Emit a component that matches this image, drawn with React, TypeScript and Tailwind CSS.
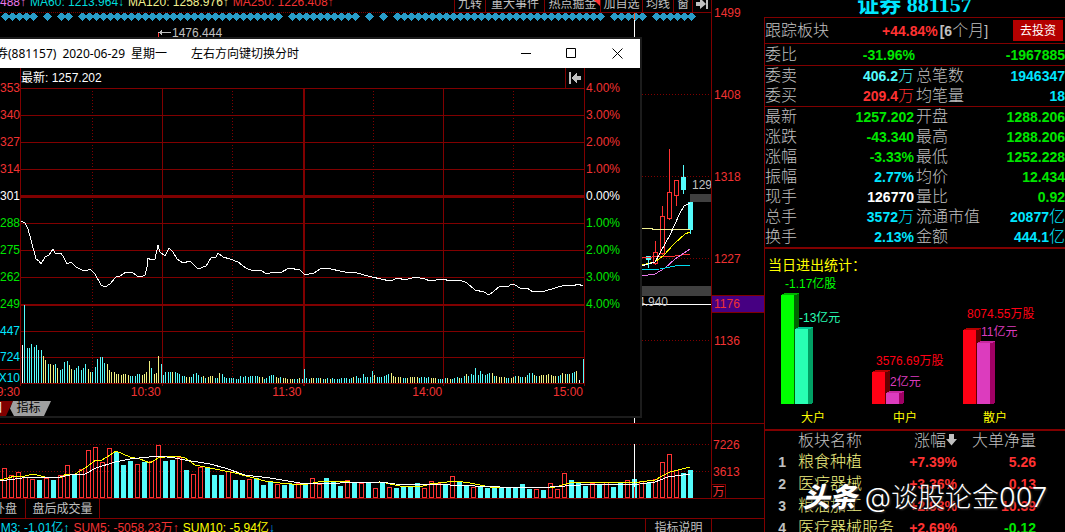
import { Fragment } from "react";

const RED = "#ff3232";
const CYAN = "#54fcfc";
const GRID = "#800000";

const maLegend = [
  { text: "488↑", color: "text-[#e878e8]" },
  { text: "MA60: 1213.964↓", color: "text-[#00dcdc]" },
  { text: "MA120: 1258.976↑", color: "text-[#f0f090]" },
  { text: "MA250: 1226.408↑", color: "text-[#f03232]" },
];

const toolbar = [
  { label: "九转", width: "w-[31px]" },
  { label: "重大事件", width: "w-[59px]" },
  { label: "热点掘金", width: "w-[56px]", hot: true },
  { label: "加自选", width: "w-[42px]" },
  { label: "均线", width: "w-[31px]" },
  { label: "窗", width: "w-[19px]" },
];

const priceAxis = ["1499", "1408", "1318", "1227", "1136"];

const diamondGaps = [5, 7, 10, 40, 51, 53, 55, 86, 92];
const diamonds = Array.from({ length: 99 }, (_, i) => i).filter((i) => !diamondGaps.includes(i));

const dayVolume =
  "r30 r23 r26 r21 r19 c18 r20 c18 r23 r33 c23 r29 r48 r51 r36 r50 c46 c33 c37 r34 c36 r37 r53 c37 c38 r41 c28 r24 r31 c30 c23 c23 r27 c18 c18 r19 c20 c13 c16 r14 c13 c14 r15 c13 r20 r14 c20 c16 c12 r18 c15 r15 c15 r10 c15 r11 c10 c11 c11 c15 r10 r17 r15 c13 r22 c16 c12 r11 c11 c10 c12 c10 c10 c11 c14 c9 r9 c8 r15 r9 r25 c18 c16 c12 r15 c14 r16 c11 c16 r18 c19 r17 c15 r19 r36 r44 r28 c25 c28".split(
    " ",
  );

const minuteVolume = [
  "w38 c78 c35 c35 c39 c36 c38 c33 c33 y27",
  "y23 c19 y19 y18 c19 y15 c13 c14 c21 c22",
  "y18 y14 c13 c15 c17 c13 c15 c19 y14 y11",
  "c11 c16 c24 c26 c26 c20 y19 y13 y11 y11",
  "y9 y9 y8 y9 y9 y8 c7 c7 c7 c9",
  "c9 y8 y9 y11 y22 c15 y9 y10 y27 c19",
  "c8 c11 c11 c11 y11 c11 c10 c9 c7 c7",
  "y6 y6 c6 c9 c10 c8 c6 y7 c5 y6",
  "y7 y7 c5 c5 y10 c9 c6 c5 c5 c5",
  "c5 c4 c4 c7 c6 c7 c6 c7 c7 c7",
  "c7 y6 y6 c4 c5 c7 c8 c8 y6 y5",
  "c6 y5 y5 y4 y4 y4 c4 c4 y5 c4",
  "c14 c5 c4 y5 y5 c5 c5 y5 c4 y4",
  "c5 y4 c5 c4 c4 c4 c5 c5 c5 c4",
  "c5 y6 c7 c5 c5 c9 c6 c6 c6 c12",
  "y8 c6 c6 c6 c7 c8 c9 y10 y7 y6",
  "y6 y6 c5 c5 y5 y6 y6 y6 y6 c5",
  "c6 c6 c5 c6 y5 y5 y5 c4 c4 c4",
  "c5 y5 y4 c4 c5 c6 y5 c5 c7 y9",
  "c7 c9 c8 c15 c8 c12 c9 c8 c9 c10",
  "y10 c7 y7 y6 y6 y6 c5 c5 y5 y6",
  "c7 y7 c6 c6 y6 c8 c10 c10 y8 c7",
  "y7 y8 y8 y8 y9 y8 y7 y7 c7 c8",
  "y10 y9 c9 y9 c10 c11 y12 w3 w0 c24",
]
  .join(" ")
  .split(" ");

const barColors: Record<string, string> = { c: CYAN, y: "#f0f080", w: "#ffffff", r: RED };

const minuteLine =
  "21,221 25,223 28,229 31,240 36,259 39,261 41,264 45,257 49,255 53,249 55,253 61,253 64,258 67,264 71,262 76,267 82,270 86,271 90,269 95,274 101,285 105,287 110,284 116,277 120,276 126,272 132,272 137,276 141,277 145,275 147,267 148,258 151,260 155,259 158,245 160,252 165,256 169,248 173,252 177,259 183,263 190,261 198,269 206,266 211,258 216,257 218,253 223,257 230,259 238,262 246,268 253,271 260,270 267,274 273,272 280,273 289,268 300,270 305,275 314,273 320,269 326,268 345,272 353,272 372,277 390,281 398,278 405,280 415,277 425,279 430,281 443,279 450,281 460,280 467,283 475,290 484,292 489,295 493,292 500,286 508,287 511,284 515,285 520,288 527,288 533,292 545,291 555,288 565,285 573,286 578,284 583,286";

const minutePrices = [
  { price: "353", pct: "4.00%", color: "text-[#f03232]" },
  { price: "340", pct: "3.00%", color: "text-[#f03232]" },
  { price: "327", pct: "2.00%", color: "text-[#f03232]" },
  { price: "314", pct: "1.00%", color: "text-[#f03232]" },
  { price: "301", pct: "0.00%", color: "text-white" },
  { price: "288", pct: "1.00%", color: "text-[#00e600]" },
  { price: "275", pct: "2.00%", color: "text-[#00e600]" },
  { price: "262", pct: "3.00%", color: "text-[#00e600]" },
  { price: "249", pct: "4.00%", color: "text-[#00e600]" },
];

const green = "text-[#00e600]";
const cyan = "text-[#00e6ff]";

const quotes = [
  { left: ["最新", "1257.202", green], right: ["开盘", "1288.206", green] },
  { left: ["涨跌", "-43.340", green], right: ["最高", "1288.206", green] },
  { left: ["涨幅", "-3.33%", green], right: ["最低", "1252.228", green] },
  { left: ["振幅", "2.77%", cyan], right: ["均价", "12.434", green] },
  { left: ["现手", "126770", "text-white"], right: ["量比", "0.92", green] },
  { left: ["总手", "3572万", cyan], right: ["流通市值", "20877亿", cyan] },
  { left: ["换手", "2.13%", cyan], right: ["金额", "444.1亿", cyan] },
];

const orders = [
  { left: ["委卖", "406.2万", "text-[#54fcfc]"], right: ["总笔数", "1946347", cyan] },
  { left: ["委买", "209.4万", "text-[#ff3232]"], right: ["均笔量", "18", cyan] },
];

const sectors = [
  { name: "粮食种植", change: "+7.39%", net: "5.26", netColor: "text-[#ff3232]" },
  { name: "医疗器械", change: "+3.36%", net: "0.13", netColor: "text-[#ff3232]" },
  { name: "粮油加工", change: "+2.93%", net: "10.39", netColor: "text-[#ff3232]" },
  { name: "医疗器械服务", change: "+2.69%", net: "-0.12", netColor: "text-[#00e600]" },
];

const flowBars = [
  { x: 781, top: 295, front: "#00ff00", side: "#006400", cap: "#00b400" },
  { x: 795, top: 329, front: "#28ffb4", side: "#00a064", cap: "#00c896" },
  { x: 872, top: 372, front: "#ff0014", side: "#640000", cap: "#b40000" },
  { x: 886, top: 393, front: "#dc3cbe", side: "#a00064", cap: "#c828a0" },
  { x: 963, top: 330, front: "#ff0014", side: "#640000", cap: "#b40000" },
  { x: 977, top: 343, front: "#dc3cbe", side: "#a00064", cap: "#c828a0" },
];

const flowLabels = [
  { x: 785, y: 288, text: "-1.17亿股", fill: "#00ff00" },
  { x: 799, y: 322, text: "-13亿元", fill: "#28ffb4" },
  { x: 876, y: 365, text: "3576.69万股", fill: "#ff0014" },
  { x: 890, y: 386, text: "2亿元", fill: "#dc3cbe" },
  { x: 967, y: 318, text: "8074.55万股", fill: "#ff0014" },
  { x: 981, y: 336, text: "11亿元", fill: "#dc3cbe" },
  { x: 801, y: 422, text: "大户", fill: "#ffff00" },
  { x: 893, y: 422, text: "中户", fill: "#ffff00" },
  { x: 983, y: 422, text: "散户", fill: "#ffff00" },
];

function QuoteRows({ rows }: { rows: { left: string[]; right: string[] }[] }) {
  return (
    <dl className="grid grid-cols-2 gap-x-[2px] leading-5">
      {rows.map((row) => (
        <Fragment key={row.left[0]}>
          {[row.left, row.right].map(([label, value, color]) => (
            <div key={label} className="flex h-5 items-center justify-between">
              <dt className="text-base/5 font-light">{label}</dt>
              <dd className={`text-sm/5 font-bold ${color}`}>
                {value.replace(/[万亿]/, "")}
                <span className="text-base/5 font-light">{value.match(/[万亿]/)?.[0]}</span>
              </dd>
            </div>
          ))}
        </Fragment>
      ))}
    </dl>
  );
}

function TopBar() {
  return (
    <div className="flex h-[13px] items-end justify-between overflow-hidden whitespace-nowrap">
      <div className="flex h-[13px] flex-1 items-end gap-1 border-b border-dotted border-[#800000] pb-[3px] leading-[14px]">
        {maLegend.map((item) => (
          <span key={item.text} className={item.color}>
            {item.text}
          </span>
        ))}
      </div>
      <div className="flex h-[13px] items-end border-b border-[#800000]">
        {toolbar.map((item) => (
          <button
            key={item.label}
            className={`relative h-5 shrink-0 border-l border-[#800000] pt-1 text-center leading-[14px] ${item.width}`}
          >
            {item.label}
            {item.hot && (
              <svg className="absolute right-0 bottom-1.5 h-[7px] w-[7px]" viewBox="0 0 7 7">
                <path d="M0 0h7v7z" fill={RED} />
              </svg>
            )}
          </button>
        ))}
        <button aria-label="收起" className="h-5 w-[19px] shrink-0 border-l border-[#800000] pt-1">
          <svg className="mx-auto h-[14px] w-[13px]" viewBox="0 0 13 14" fill="#c0c0c0">
            <path d="M0 5h4V1l6 6-6 5V9H0zM10 1h2v11h-2z" />
          </svg>
        </button>
      </div>
    </div>
  );
}

function DayChart() {
  const hollow = [
    { x: 676, top: 180, bottom: 195, high: 180, low: 206 },
    { x: 669, top: 192, bottom: 218, high: 149, low: 220 },
    { x: 662, top: 216, bottom: 253, high: 206, low: 255 },
    { x: 655, top: 252, bottom: 263, high: 241, low: 265 },
  ];
  return (
    <svg
      className="block h-[410px] w-full"
      viewBox="0 13 711 410"
      preserveAspectRatio="none"
      shapeRendering="crispEdges"
      fill="none"
    >
      <path d="M0 94.5H709M0 176.5H709M0 258.5H709M0 340.5H709" stroke={GRID} strokeDasharray="1 2" />
      {diamonds.map((i) => (
        <path key={i} d={`M${5 + i * 7} 12l4.500 4.500-4.500 4.500-4.500-4.500z`} fill="#289cc8" />
      ))}
      <path d="M634.5 20V40M634.500 416V423" stroke="#fff" />
      <path d="M634.5 13V20" stroke="#f06432" />
      <path d="M158.500 32V38" stroke={RED} />
      <path d="M159 32.500H171" stroke="#c0c0c0" />
      <path d="M158 32.500l4-2.500v5z" fill="#c0c0c0" />
      {hollow.map((c) => (
        <g key={c.x} stroke={RED}>
          <path d={`M${c.x + 0.5} ${c.high}V${c.top}M${c.x + 0.5} ${c.bottom}V${c.low}`} />
          <rect x={c.x - 1.5} y={c.top + 0.5} width="4" height={c.bottom - c.top} />
        </g>
      ))}
      <path d="M683.5 165V194M690.500 202V234M648.500 256V268" stroke={CYAN} />
      <path d="M681 177h5v13h-5zM688 202h5v28h-5zM646 256h5v4h-5z" fill={CYAN} />
      <path d="M641 228.500h11v1h38" stroke="#f0f090" />
      <path d="M641 257.500L675 256L690 254" stroke={RED} />
      <path d="M641 276L655 274L665 268L675 259L690 249" stroke="#e878e8" />
      <path d="M641 269.500L660 269L675 266L690 265" stroke="#00dcf0" />
      <path d="M641 265L655 262L663 256L675 243L685 234L690 232" stroke="#ffff00" />
      <path d="M641 266L655 262L660 253L670 235L680 213L684 206L690 203" stroke="#fff" />
      <path d="M690 194h21v8h-21zM641 286h70v10h-70z" fill="#404040" />
      <path d="M641 304.500H711" stroke="#fff" />
      <g fill="#c0c0c0" fontSize="12">
        <text x="172" y="37">
          1476.444
        </text>
        <text x="692" y="189">
          129
        </text>
        <text x="638" y="306">
          4.940
        </text>
      </g>
    </svg>
  );
}

function DayVolume() {
  return (
    <svg
      className="block h-[74px] w-full"
      viewBox="0 424 711 74"
      preserveAspectRatio="none"
      shapeRendering="crispEdges"
      fill="none"
    >
      <path d="M0 444.500H709M0 471.500H709" stroke={GRID} strokeDasharray="1 2" />
      {dayVolume.map((bar, i) => {
        const height = Number(bar.slice(1));
        const x = 2 + i * 7;
        return bar[0] === "c" ? (
          <rect key={i} x={x} y={498 - height} width="5" height={height} fill={CYAN} />
        ) : (
          <rect key={i} x={x + 0.5} y={498.5 - height} width="4" height={height - 1} stroke={RED} />
        );
      })}
      <polyline
        stroke="#ffff00"
        points="0,480 8,478 15,476 25,476 33,474 45,477 60,478 66,474 75,474 85,468 96,460 102,460 110,455 116,451 130,457 140,459 150,463 158,458 165,457 177,456 185,458 195,465 210,468 225,471 235,473 250,477 265,481 280,483 303,485 318,482 345,481 355,483 382,482 390,484 400,486 420,487 430,484 455,481 470,483 490,487 520,488 555,487 570,483 590,482 610,483 640,482 655,480 662,476 670,472 690,467"
      />
      <polyline
        stroke="#fff"
        points="0,481 30,477 60,477 70,475 85,474 96,468 115,462 130,459 158,456 175,458 185,460 210,464 225,468 245,475 270,478 300,483 340,483 380,482 395,484 450,485 500,487 550,487 580,485 640,484 655,482 668,477 690,474"
      />
      <path d="M634.5 444V487" stroke="#fff" />
      <path d="M634.5 487V498" stroke="#c00000" />
    </svg>
  );
}

function MinuteChart() {
  return (
    <svg
      className="block h-[298px] w-full"
      viewBox="20 88 565 298"
      preserveAspectRatio="none"
      shapeRendering="crispEdges"
      fill="none"
    >
      <g stroke={GRID}>
        <path d="M20 88.500H585M20 115.500H585M20 142.500H585M20 169.500H585M20 223.500H585M20 250.500H585M20 277.500H585M20 331.500H585M20 357.500H585M20 383.500H585" />
        <path d="M20 196.500H585" strokeWidth="3" />
        <path d="M20 305H585M304 88V386" strokeWidth="2" />
        <path d="M20.500 88V386M162.500 88V386M443.500 88V386M584.500 88V386" />
        <path d="M92.500 91V383M232.500 91V383M373.500 91V383M513.500 91V383" strokeDasharray="1 2" />
      </g>
      {minuteVolume.map((bar, i) => {
        const height = Number(bar.slice(1));
        return (
          <rect
            key={i}
            x={Math.round(22 + i * 2.349)}
            y={383 - height}
            width="1"
            height={height}
            fill={barColors[bar[0]]}
          />
        );
      })}
      <polyline points={minuteLine} stroke="#fff" />
    </svg>
  );
}

function MinuteWindow() {
  return (
    <section className="absolute top-[37px] left-0 w-[642px] max-w-full border-y-2 border-r-2 border-[#1c1c1c] bg-black">
      <header className="flex h-[29px] items-center overflow-hidden bg-white font-['Noto_Sans','Noto_Sans_CJK_SC',sans-serif] whitespace-nowrap text-black">
        <h2 className="-ml-1 flex flex-1 gap-1.5">
          <span>券(881157)</span>
          <span>2020-06-29</span>
          <span>星期一</span>
          <span className="ml-[18px]">左右方向键切换分时</span>
        </h2>
        <button aria-label="最小化" className="flex h-full w-[45px] items-center justify-center">
          <svg className="h-[11px] w-[11px]" viewBox="0 0 11 11" stroke="#000">
            <path d="M0 5.500h10" />
          </svg>
        </button>
        <button aria-label="最大化" className="flex h-full w-[45px] items-center justify-center">
          <svg className="h-[11px] w-[11px]" viewBox="0 0 11 11" stroke="#000" fill="none">
            <path d="M.5 .5h9v9h-9z" />
          </svg>
        </button>
        <button aria-label="关闭" className="flex h-full w-[46px] items-center justify-center">
          <svg className="h-[11px] w-[11px]" viewBox="0 0 11 11" stroke="#000">
            <path d="M.5 .5l10 10M10.500 .5l-10 10" />
          </svg>
        </button>
      </header>

      <div className="flex">
        <div className="flex w-5 flex-col items-end overflow-hidden pt-[7px]">
          {minutePrices.map((row) => (
            <span key={row.price} className={`h-[27px] leading-[27px] ${row.color}`}>
              {row.price}
            </span>
          ))}
          <span className={`h-[27px] leading-[27px] ${cyan}`}>447</span>
          <span className={`h-6 leading-6 ${cyan}`}>724</span>
          <span className={`h-[17px] border-t border-[#800000] leading-4 ${cyan}`}>X10</span>
        </div>
        <div className="min-w-0 flex-1">
          <div className="flex h-5 items-center justify-between border-l border-[#800000] text-white">
            <span>最新: 1257.202</span>
            <button
              aria-label="回到起点"
              className="flex h-5 w-5 items-center justify-center border-x border-[#800000]"
            >
              <svg className="h-3 w-3" viewBox="0 0 12 12" fill="#c0c0c0" shapeRendering="crispEdges">
                <path d="M0 0h2v12H0zM2 6L8 0V4h4v4H8v4z" />
              </svg>
            </button>
          </div>
          <MinuteChart />
        </div>
        <div className="w-[55px] pt-[7px] pl-[1px]">
          {minutePrices.map((row) => (
            <div key={row.price + row.pct} className={`h-[27px] leading-[27px] ${row.color}`}>
              {row.pct}
            </div>
          ))}
        </div>
      </div>

      <div className="flex pr-[57px] leading-3 text-[#f03232]">
        <span className="flex w-5 justify-end overflow-hidden">9:30</span>
        {["10:30", "11:30", "14:00", "15:00"].map((time) => (
          <span key={time} className="flex-1 text-right">
            {time}
          </span>
        ))}
      </div>

      <div className="mt-[3px] flex h-[15px] leading-[15px]">
        <button className="h-[15px] w-[13px] overflow-hidden bg-[#800000] text-white [clip-path:polygon(0_0,100%_0,6px_100%,0_100%)]">
          <span className="flex w-0.5 justify-end">图</span>
        </button>
        <button className="-ml-[3px] h-[15px] w-[41px] bg-[#a0a0a0] pr-1 text-black [clip-path:polygon(3px_0,100%_0,34px_100%,4px_100%,0_50%)]">
          指标
        </button>
      </div>
    </section>
  );
}

function MoneyFlow() {
  return (
    <svg
      className="block h-[180px] w-[300px]"
      viewBox="765 249 300 180"
      shapeRendering="crispEdges"
      role="img"
      aria-label="当日进出统计"
    >
      <text x="768" y="270" fontSize="14" fill="#ffff00">
        当日进出统计：
      </text>
      {flowBars.map((bar) => (
        <g key={bar.x}>
          <path d={`M${bar.x + 13} ${bar.top}l5-2V403l-2 1h-3z`} fill={bar.side} />
          <path d={`M${bar.x} ${bar.top}l4-2h14v1l-5 1z`} fill={bar.cap} />
          <rect x={bar.x} y={bar.top} width="13" height={404 - bar.top} fill={bar.front} />
        </g>
      ))}
      {flowLabels.map((label) => (
        <text key={label.text} x={label.x} y={label.y} fontSize="12" fill={label.fill}>
          {label.text}
        </text>
      ))}
    </svg>
  );
}

function QuotePanel() {
  return (
    <aside className="relative w-[301px] shrink-0 overflow-hidden text-[#c0c0c0]">
      <h1 className="-mt-[7px] h-6 text-center font-['Liberation_Serif','Noto_Sans_CJK_SC',serif] text-[22px] leading-6 font-bold text-[#00e6ff]">
        证券 881157
      </h1>
      <div className="border-t border-l border-[#800000]">
        <div className="flex h-[25px] items-center">
          <span className="w-[117px] text-base font-light">跟踪板块</span>
          <span className="text-sm font-bold text-[#ff3232]">+44.84%</span>
          <span className="ml-0.5 text-sm">
            <b>[6</b>
            <span className="text-base font-light">个月</span>]
          </span>
          <button className="mr-0.5 ml-auto h-[21px] w-[50px] bg-[#b40000] text-white">去投资</button>
        </div>
        <div className="flex h-[22px] items-center border-t border-[#800000] text-sm font-bold text-[#00e600]">
          <span className="w-8 text-base font-light text-[#c0c0c0]">委比</span>
          <span className="w-[118px] text-right">-31.96%</span>
          <span className="flex-1 text-right">-1967885</span>
        </div>
        <div className="border-t border-[#800000]">
          <QuoteRows rows={orders} />
        </div>
        <div className="border-t border-b-2 border-[#800000]">
          <QuoteRows rows={quotes} />
        </div>
        <MoneyFlow />
        <table className="w-full table-fixed border-t-2 border-[#800000]">
          <thead>
            <tr className="h-[21px] text-base/5">
              <th className="w-[33px]" />
              <th className="text-left font-light">板块名称</th>
              <th className="w-[60px] text-right font-light whitespace-nowrap">
                涨幅
                <svg className="inline h-3 w-[11px] align-baseline" viewBox="0 0 11 12" fill="#c0c0c0">
                  <path d="M3 0h5v5h3L5.500 11.500 0 5h3z" />
                </svg>
              </th>
              <th className="w-[79px] text-right font-light">大单净量</th>
              <th className="w-[29px]" />
            </tr>
          </thead>
          <tbody className="text-sm/5 font-bold">
            {sectors.map((sector, i) => (
              <tr key={sector.name} className="h-[22px]">
                <td className="pr-3 text-right">{i + 1}</td>
                <td className="text-base/5 font-light whitespace-nowrap text-[#f0f080]">{sector.name}</td>
                <td className="text-right text-[#ff3232]">{sector.change}</td>
                <td className={`text-right ${sector.netColor}`}>{sector.net}</td>
                <td />
              </tr>
            ))}
          </tbody>
        </table>
      </div>
    </aside>
  );
}

export default function App() {
  return (
    <div className="relative flex h-screen w-full overflow-hidden bg-black font-['Liberation_Sans','Noto_Sans_CJK_SC',sans-serif] text-xs text-[#c0c0c0]">
      <main className="relative min-w-0 flex-1">
        <div className="flex">
          <div className="min-w-0 flex-1">
            <TopBar />
            <DayChart />
          </div>
          <div className="relative w-[53px] border-l border-[#800000] pt-1.5 pl-0.5 text-[#f03232]">
            {priceAxis.map((price) => (
              <div key={price} className="h-[82px] leading-[14px]">
                {price}
              </div>
            ))}
            <div className="absolute top-[295px] left-0 h-[18px] w-full border-y border-[#800000] bg-[#460082] pl-0.5 leading-4">
              1176
            </div>
          </div>
        </div>

        <div className="flex border-t border-[#800000]">
          <div className="min-w-0 flex-1">
            <DayVolume />
          </div>
          <div className="flex w-[53px] flex-col border-l border-[#800000] text-[#f03232]">
            <span className="mt-[14px] h-[27px] pl-[1px] leading-[14px]">7226</span>
            <span className="pl-[1px] leading-[14px]">3613</span>
            <span className="mt-auto h-[14px] w-[14px] border-t border-r border-[#800000] text-center leading-[14px]">
              万
            </span>
          </div>
        </div>

        <div className="flex h-[21px] border-y border-[#800000] leading-[20px]">
          <button className="flex w-[26px] justify-end overflow-hidden border-r border-[#800000] pr-2 whitespace-nowrap">
            外盘
          </button>
          <button className="w-[74px] border-r border-[#800000]">盘后成交量</button>
        </div>

        <div className="flex h-[18px] whitespace-nowrap leading-[18px]">
          <div className="-ml-4 flex flex-1 gap-1">
            <span className="text-[#00dcf0]">SUM3: -1.01亿↑</span>
            <span className="text-[#f03232]">SUM5: -5058.23万↑</span>
            <span className="text-[#ffff00]">
              SUM10: -5.94亿<span className="text-[#00a0f0]">↓</span>
            </span>
          </div>
          <button className="w-[66px] border-l border-[#800000]">指标说明</button>
          <div className="w-[53px] border-l border-[#800000]" />
        </div>

        <MinuteWindow />
      </main>

      <QuotePanel />

      <div className="pointer-events-none absolute right-[18px] bottom-4 flex items-center gap-2 font-['Inter','Noto_Sans_CJK_SC',sans-serif] text-[27px] leading-9 text-white [text-shadow:0_0_3px_#000,1px_1px_2px_#444]">
        <span className="font-black italic">头条</span>
        <span className="font-light">@谈股论金007</span>
      </div>
    </div>
  );
}
